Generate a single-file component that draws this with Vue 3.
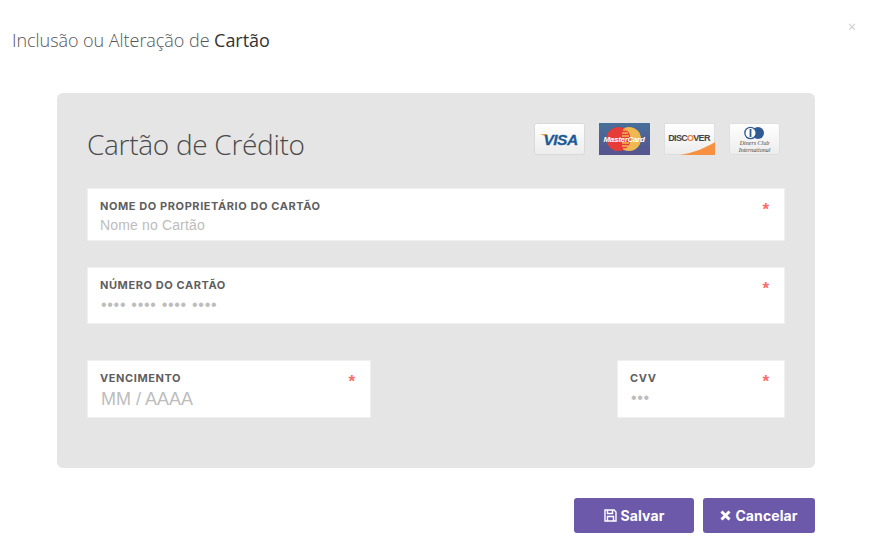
<script setup>
</script>

<template>
  <div class="modal">
    <header class="head">
      <h1 class="title">Inclusão ou Alteração de <b>Cartão</b></h1>
      <span class="close">×</span>
    </header>
    <section class="panel">
      <div class="panel-top">
        <h2 class="panel-title">Cartão de Crédito</h2>
        <div class="cards">
          <svg class="card" viewBox="0 0 51 32" width="51" height="32">
            <defs>
              <linearGradient id="cg" x1="0" y1="0" x2="0" y2="1"><stop offset="0" stop-color="#fff"/><stop offset="1" stop-color="#ececec"/></linearGradient>
            </defs>
            <rect x=".5" y=".5" width="50" height="31" rx="2" fill="url(#cg)" stroke="#d9d9d9"/>
            <path d="M6 11h6.5l1.6 6C12.6 14 9.8 12 6 11z" fill="#f0a81e"/>
            <text x="26.5" y="22" text-anchor="middle" class="visa">VISA</text>
          </svg>
          <svg class="card" viewBox="0 0 51 32" width="51" height="32">
            <defs>
              <linearGradient id="mg" x1="0" y1="0" x2="0" y2="1"><stop offset="0" stop-color="#47709a"/><stop offset="1" stop-color="#57538f"/></linearGradient>
            </defs>
            <rect width="51" height="32" fill="url(#mg)"/>
            <circle cx="30" cy="16" r="12" fill="#f0b851"/>
            <circle cx="19.5" cy="16" r="12" fill="#e63b36"/>
            <path d="M24 7h4M23 10h6M23 13h7M23 20h7M23 23h6M24 26h4" stroke="#f0b851" stroke-width="1.3"/>
            <text x="25" y="19" text-anchor="middle" class="mc">MasterCard</text>
          </svg>
          <svg class="card" viewBox="0 0 51 32" width="51" height="32">
            <rect x=".5" y=".5" width="50" height="31" fill="url(#cg)" stroke="#dedede"/>
            <path d="M16 32C30 30 43 24 51 19v13z" fill="#f79040"/>
            <text x="25" y="18" text-anchor="middle" class="disc">DISC<tspan fill="#ee7f2d">O</tspan>VER</text>
          </svg>
          <svg class="card" viewBox="0 0 51 32" width="51" height="32">
            <rect x=".5" y=".5" width="50" height="31" rx="2" fill="url(#cg)" stroke="#dedede"/>
            <circle cx="29" cy="10" r="6" fill="#2f5a93"/>
            <circle cx="21.5" cy="10" r="6.3" fill="#2f5a93"/>
            <circle cx="21.5" cy="10" r="5" fill="#fff"/>
            <rect x="20.6" y="6" width="1.8" height="8" fill="#2f5a93"/>
            <text x="25.5" y="22" text-anchor="middle" class="din">Diners Club</text>
            <text x="25.5" y="28.8" text-anchor="middle" class="din">International</text>
          </svg>
        </div>
      </div>

      <div class="field field-name">
        <div class="field-body">
          <label class="lbl">NOME DO PROPRIETÁRIO DO CARTÃO</label>
          <span class="ph">Nome no Cartão</span>
        </div>
        <span class="req">*</span>
      </div>

      <div class="field field-number">
        <div class="field-body">
          <label class="lbl">NÚMERO DO CARTÃO</label>
          <span class="dots">•••• •••• •••• ••••</span>
        </div>
        <span class="req">*</span>
      </div>

      <div class="split">
        <div class="field field-venc">
          <div class="field-body">
            <label class="lbl">VENCIMENTO</label>
            <span class="ph big">MM / AAAA</span>
          </div>
          <span class="req">*</span>
        </div>
        <div class="field field-cvv">
          <div class="field-body">
            <label class="lbl">CVV</label>
            <span class="dots">•••</span>
          </div>
          <span class="req">*</span>
        </div>
      </div>
    </section>
    <footer class="foot">
      <button class="btn save">
        <svg width="13" height="13" viewBox="0 0 13 13" fill="none" stroke="#fff" stroke-width="1.4"><path d="M1 1h9l2 2v9H1z"/><path d="M3.5 1v3.5h5V1M3.5 12V7.5h6V12"/></svg>
        Salvar
      </button>
      <button class="btn cancel">
        <svg width="11" height="11" viewBox="0 0 11 11" stroke="#fff" stroke-width="3"><path d="M1.5 1.5l8 8M9.5 1.5l-8 8"/></svg>
        Cancelar
      </button>
    </footer>
  </div>
</template>

<style scoped>
.modal { width: 871px; height: 547px; background: #fff; box-sizing: border-box; overflow: hidden; font-family: "Open Sans", sans-serif; }
.head { height: 93px; display: flex; justify-content: space-between; align-items: flex-start; padding: 0 15px 0 12px; box-sizing: border-box; }
.title { margin: 28px 0 0; font-size: 18px; line-height: 24px; font-weight: 300; color: #555; letter-spacing: -.05px; }
.title b { font-weight: 400; color: #333; }
.close { margin-top: 17px; font-size: 14px; line-height: 20px; color: #ccc; }
.panel { margin: 0 56px 0 57px; height: 375px; box-sizing: border-box; background: #e5e5e5; border-radius: 6px; padding: 0 30px; }
.panel-top { height: 95px; display: flex; justify-content: space-between; padding-top: 30px; box-sizing: border-box; }
.panel-title { margin: 2px 0 0; font-size: 28px; line-height: 38px; font-weight: 300; color: #4a4a4a; letter-spacing: -.3px; }
.cards { display: flex; gap: 14px; padding-right: 5px; height: 32px; }
.card { display: block; }
.visa { font: italic 700 15.5px "Liberation Sans", sans-serif; fill: #1b5a96; letter-spacing: -.5px; stroke: #1b5a96; stroke-width: .3px; }
.mc { font: italic 700 8px "Liberation Sans", sans-serif; fill: #fff; letter-spacing: -.3px; }
.disc { font: 700 9px "Liberation Sans", sans-serif; fill: #444; letter-spacing: -.7px; }
.din { font: italic 6px "Liberation Serif", serif; fill: #444; }
.field { background: #fff; border: 1px solid #f0f0f0; display: flex; justify-content: space-between; box-sizing: border-box; padding: 0 12px; }
.field-body { display: flex; flex-direction: column; }
.field-name { height: 53px; margin-bottom: 26px; }
.field-number { height: 57px; margin-bottom: 36px; }
.split { display: flex; justify-content: space-between; }
.field-venc { width: 284px; height: 58px; }
.field-cvv { width: 168px; height: 58px; }
.lbl { margin-top: 10px; font: 700 11px/14px "Inter", sans-serif; color: #5f5f5f; letter-spacing: .58px; }
.ph { margin-top: 3px; font: 14px/18px "Liberation Sans", sans-serif; color: #bdbdbd; letter-spacing: .15px; }
.ph.big { margin-top: 2px; margin-left: 1px; font-size: 18px; line-height: 24px; letter-spacing: 0; }
.dots { margin-top: 4px; margin-left: 1px; font: 16px/18px "Liberation Sans", sans-serif; color: #bdbdbd; letter-spacing: .7px; }
.req { margin-top: 10px; margin-right: 3px; font: 700 17px/22px "Liberation Sans", sans-serif; color: #fb6b6b; }
.foot { display: flex; justify-content: flex-end; gap: 9px; padding: 30px 56px 0 0; }
.btn { height: 35px; border: 0; border-radius: 3px; background: #6c59a9; color: #fff; font: 700 14px "Inter", sans-serif; letter-spacing: .1px; display: flex; align-items: center; justify-content: center; gap: 4px; padding: 0; }
.save { width: 120px; }
.cancel { width: 112px; }
</style>
